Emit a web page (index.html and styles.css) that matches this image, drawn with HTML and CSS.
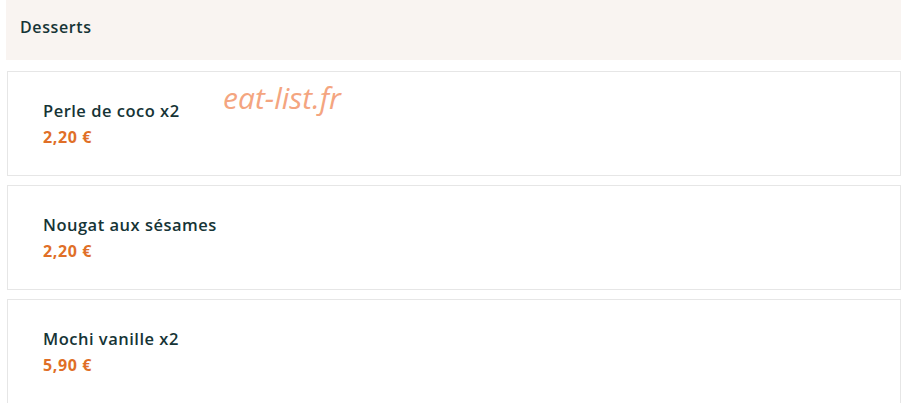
FILE: index.html
```html
<!DOCTYPE html>
<html>
<head>
  <meta charset="UTF-8">
  <link rel="stylesheet" href="styles.css">
</head>
<body>
  <div class="menu-section">
    <div class="section-header">Desserts</div>

    <!-- Dish list -->
    <div class="dish-list">
      <div class="dish-card">
        <div class="dish-name">Perle de coco x2</div>
        <div class="dish-price">2,20 €</div>
      </div>
      <div class="dish-card">
        <div class="dish-name">Nougat aux sésames</div>
        <div class="dish-price">2,20 €</div>
      </div>
      <div class="dish-card">
        <div class="dish-name">Mochi vanille x2</div>
        <div class="dish-price">5,90 €</div>
      </div>
    </div>
  </div>

  <div class="watermark">eat-list.fr</div>
</body>
</html>
```

FILE: styles.css
```css
body {
  margin: 0;
  background: white;
  font-family: "Open Sans", sans-serif;
  color: #163436;
  overflow: hidden;
}
.menu-section {
  width: 895px;
  padding-left: 6px;
}
.section-header {
  height: 60px;
  box-sizing: border-box;
  padding: 16px 14px 0;
  background: #f9f4f1;
  font-size: 16px;
  font-weight: 600;
  letter-spacing: 0.6px;
}
.dish-list {
  display: flex;
  flex-direction: column;
  gap: 9px;
  margin-top: 11px;
  margin-left: 1px;
}
.dish-card {
  height: 105px;
  box-sizing: border-box;
  padding: 28px 35px 0;
  border: 1px solid #e6e6e6;
  background: white;
}
.dish-name {
  font-size: 16.5px;
  font-weight: 600;
  line-height: 22px;
  letter-spacing: 0.5px;
}
.dish-price {
  margin-top: 4px;
  font-size: 16px;
  font-weight: 700;
  letter-spacing: 0.6px;
  color: #e06f27;
}
.watermark {
  position: absolute;
  left: 223px;
  top: 77px;
  font-family: "Open Sans", sans-serif;
  font-style: italic;
  font-size: 30px;
  color: #f4a580;
}
```
